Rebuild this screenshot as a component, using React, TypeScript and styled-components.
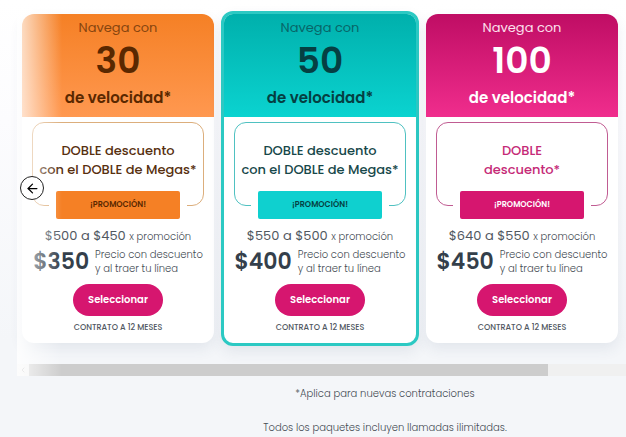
import React from "react";
import { ArrowLeft, ChevronLeft } from "lucide-react";
import styled, { createGlobalStyle } from "styled-components";

interface Plan {
  megas: number;
  headline: string[];
  before: number;
  promo: number;
  price: number;
  from: string;
  to: string;
  ink: string;
  softInk: string;
  titleInk: string;
  accent: string;
  line: string;
  featured?: boolean;
}

const plans: Plan[] = [
  {
    megas: 30,
    headline: ["DOBLE descuento", "con el DOBLE de Megas*"],
    before: 500,
    promo: 450,
    price: 350,
    from: "#f58025",
    to: "#ff9850",
    ink: "#5a2800",
    softInk: "#86450f",
    titleInk: "#57300f",
    accent: "#f58025",
    line: "#dcae7c",
  },
  {
    megas: 50,
    headline: ["DOBLE descuento", "con el DOBLE de Megas*"],
    before: 550,
    promo: 500,
    price: 400,
    from: "#00b0ac",
    to: "#0bd3d0",
    ink: "#053f42",
    softInk: "#086668",
    titleInk: "#17484a",
    accent: "#0fd0cf",
    line: "#4fc1c1",
    featured: true,
  },
  {
    megas: 100,
    headline: ["DOBLE", "descuento*"],
    before: 640,
    promo: 550,
    price: 450,
    from: "#bf0d64",
    to: "#f02d8d",
    ink: "#ffffff",
    softInk: "#fde0ee",
    titleInk: "#c52a77",
    accent: "#d6166f",
    line: "#c05c92",
  },
];

const PlanCard: React.FC<{ plan: Plan }> = ({ plan }) => (
  <Card $featured={plan.featured}>
    <CardHeader $from={plan.from} $to={plan.to} $ink={plan.ink}>
      <Lead $color={plan.softInk}>Navega con</Lead>
      <Megas>{plan.megas}</Megas>
      <Speed>de velocidad*</Speed>
    </CardHeader>
    <CardBody>
      <Offer $line={plan.line} $ink={plan.titleInk}>
        {plan.headline.map((text) => (
          <span key={text}>{text}</span>
        ))}
      </Offer>
      <PromoWrapper>
        <PromoTag $accent={plan.accent} $ink={plan.ink}>
          ¡PROMOCIÓN!
        </PromoTag>
      </PromoWrapper>
      <Before>
        ${plan.before} a ${plan.promo} <small>x promoción</small>
      </Before>
      <PriceRow>
        <Price>${plan.price}</Price>
        <PriceNote>
          Precio con descuento
          <br />y al traer tu línea
        </PriceNote>
      </PriceRow>
      <SelectButton type="button">Seleccionar</SelectButton>
      <Contract>CONTRATO A 12 MESES</Contract>
    </CardBody>
  </Card>
);

const App: React.FC = () => {
  return (
    <Page>
      <GlobalStyle />
      <Carousel>
        <Cards>
          {plans.map((plan) => (
            <PlanCard key={plan.megas} plan={plan} />
          ))}
        </Cards>
        <ScrollBar>
          <ScrollStep>
            <ChevronLeft size={8} />
          </ScrollStep>
          <ScrollTrack>
            <ScrollThumb />
          </ScrollTrack>
        </ScrollBar>
        <Fade />
        <PrevButton type="button" aria-label="Anterior">
          <ArrowLeft size={15} strokeWidth={2} />
        </PrevButton>
      </Carousel>
      <Notes>
        <p>*Aplica para nuevas contrataciones</p>
        <p>Todos los paquetes incluyen llamadas ilimitadas.</p>
      </Notes>
    </Page>
  );
};

export default App;

const GlobalStyle = createGlobalStyle`
  * {
    box-sizing: border-box;
  }

  body {
    margin: 0;
    background: #f4f6f9;
    font-family: Poppins, Inter, sans-serif;
    color: #50575f;
  }

  p {
    margin: 0;
  }

  button {
    font-family: inherit;
  }
`;

const Page = styled.main`
  min-height: 100vh;
  overflow: hidden;
  background: linear-gradient(#ffffff 0, #fcfcfe 120px, #f4f6f9 340px);
`;

const Carousel = styled.section`
  position: relative;
  padding-top: 14px;
`;

const Cards = styled.div`
  display: grid;
  grid-template-columns: repeat(3, 1fr);
  gap: 10px;
  padding: 0 8px 0 22px;
`;

const Card = styled.article<{ $featured?: boolean }>`
  display: flex;
  flex-direction: column;
  margin: ${({ $featured }) => ($featured ? "-3px" : "0")};
  border: ${({ $featured }) => ($featured ? "3px solid #2cc9c3" : "none")};
  border-radius: 12px;
  overflow: hidden;
  background: #ffffff;
  box-shadow: 0 6px 14px rgba(60, 80, 110, 0.09);
`;

const CardHeader = styled.header<{ $from: string; $to: string; $ink: string }>`
  display: flex;
  flex-direction: column;
  align-items: center;
  height: 103px;
  padding-top: 5px;
  background: linear-gradient(${({ $from }) => $from}, ${({ $to }) => $to});
  color: ${({ $ink }) => $ink};
`;

const Lead = styled.p<{ $color: string }>`
  font-size: 13px;
  line-height: 18px;
  color: ${({ $color }) => $color};
`;

const Megas = styled.p`
  font-size: 36px;
  line-height: 48px;
  font-weight: 600;
`;

const Speed = styled.p`
  font-size: 15px;
  line-height: 26px;
  font-weight: 600;
`;

const CardBody = styled.div`
  display: flex;
  flex-direction: column;
  align-items: center;
  padding: 5px 10px 8px;
`;

const Offer = styled.h2<{ $line: string; $ink: string }>`
  display: flex;
  flex-direction: column;
  align-items: center;
  align-self: stretch;
  height: 84px;
  margin: 0;
  padding-top: 18px;
  border: 1px solid ${({ $line }) => $line};
  border-radius: 12px;
  color: ${({ $ink }) => $ink};
  font-size: 13px;
  line-height: 19px;
  font-weight: 500;
  white-space: nowrap;
`;

const PromoWrapper = styled.div`
  width: 138px;
  margin-top: -15px;
  padding: 0 7px;
  background: #ffffff;
`;

const PromoTag = styled.div<{ $accent: string; $ink: string }>`
  border-radius: 2px;
  background: ${({ $accent }) => $accent};
  color: ${({ $ink }) => $ink};
  font-size: 8px;
  line-height: 28px;
  font-weight: 600;
  text-align: center;
`;

const Before = styled.p`
  margin-top: 7px;
  font-size: 13px;
  line-height: 20px;
  white-space: nowrap;

  small {
    font-size: 10px;
    font-weight: 300;
    color: #454c54;
  }
`;

const PriceRow = styled.div`
  display: flex;
  align-items: center;
  gap: 6px;
  height: 30px;
  white-space: nowrap;
`;

const Price = styled.strong`
  color: #343f4b;
  font-size: 22px;
  line-height: 28px;
  font-weight: 600;
`;

const PriceNote = styled.p`
  font-size: 10px;
  line-height: 14px;
  font-weight: 300;
  color: #454c54;
`;

const SelectButton = styled.button`
  width: 90px;
  height: 32px;
  margin-top: 7px;
  padding: 0;
  border: none;
  border-radius: 16px;
  background: #d6166f;
  color: #ffffff;
  font-size: 10px;
  font-weight: 600;
`;

const Contract = styled.p`
  margin-top: 5px;
  font-size: 8px;
  line-height: 14px;
  font-weight: 500;
`;

const ScrollBar = styled.div`
  display: flex;
  height: 12px;
  margin-top: 21px;
  padding-left: 17px;
`;

const ScrollStep = styled.div`
  display: flex;
  align-items: center;
  justify-content: center;
  width: 12px;
  background: #f1f1f1;
  color: #a3a3a3;
`;

const ScrollTrack = styled.div`
  flex: 1;
  background: #f0f0f0;
`;

const ScrollThumb = styled.div`
  width: 87%;
  height: 100%;
  background: #cdcdcd;
`;

const Fade = styled.div`
  position: absolute;
  top: 0;
  bottom: 0;
  left: 17px;
  width: 45px;
  background: linear-gradient(
    to right,
    rgba(255, 255, 255, 0.8),
    rgba(255, 255, 255, 0)
  );
`;

const PrevButton = styled.button`
  position: absolute;
  top: 176px;
  left: 20px;
  display: flex;
  align-items: center;
  justify-content: center;
  width: 24px;
  height: 24px;
  padding: 0;
  border: 1px solid #222222;
  border-radius: 50%;
  background: #ffffff;
  color: #000000;
`;

const Notes = styled.footer`
  display: flex;
  flex-direction: column;
  align-items: center;
  gap: 18px;
  padding: 10px 0 0 144px;
  font-size: 10px;
  line-height: 16px;
  font-weight: 300;
  color: #454c54;
`;
